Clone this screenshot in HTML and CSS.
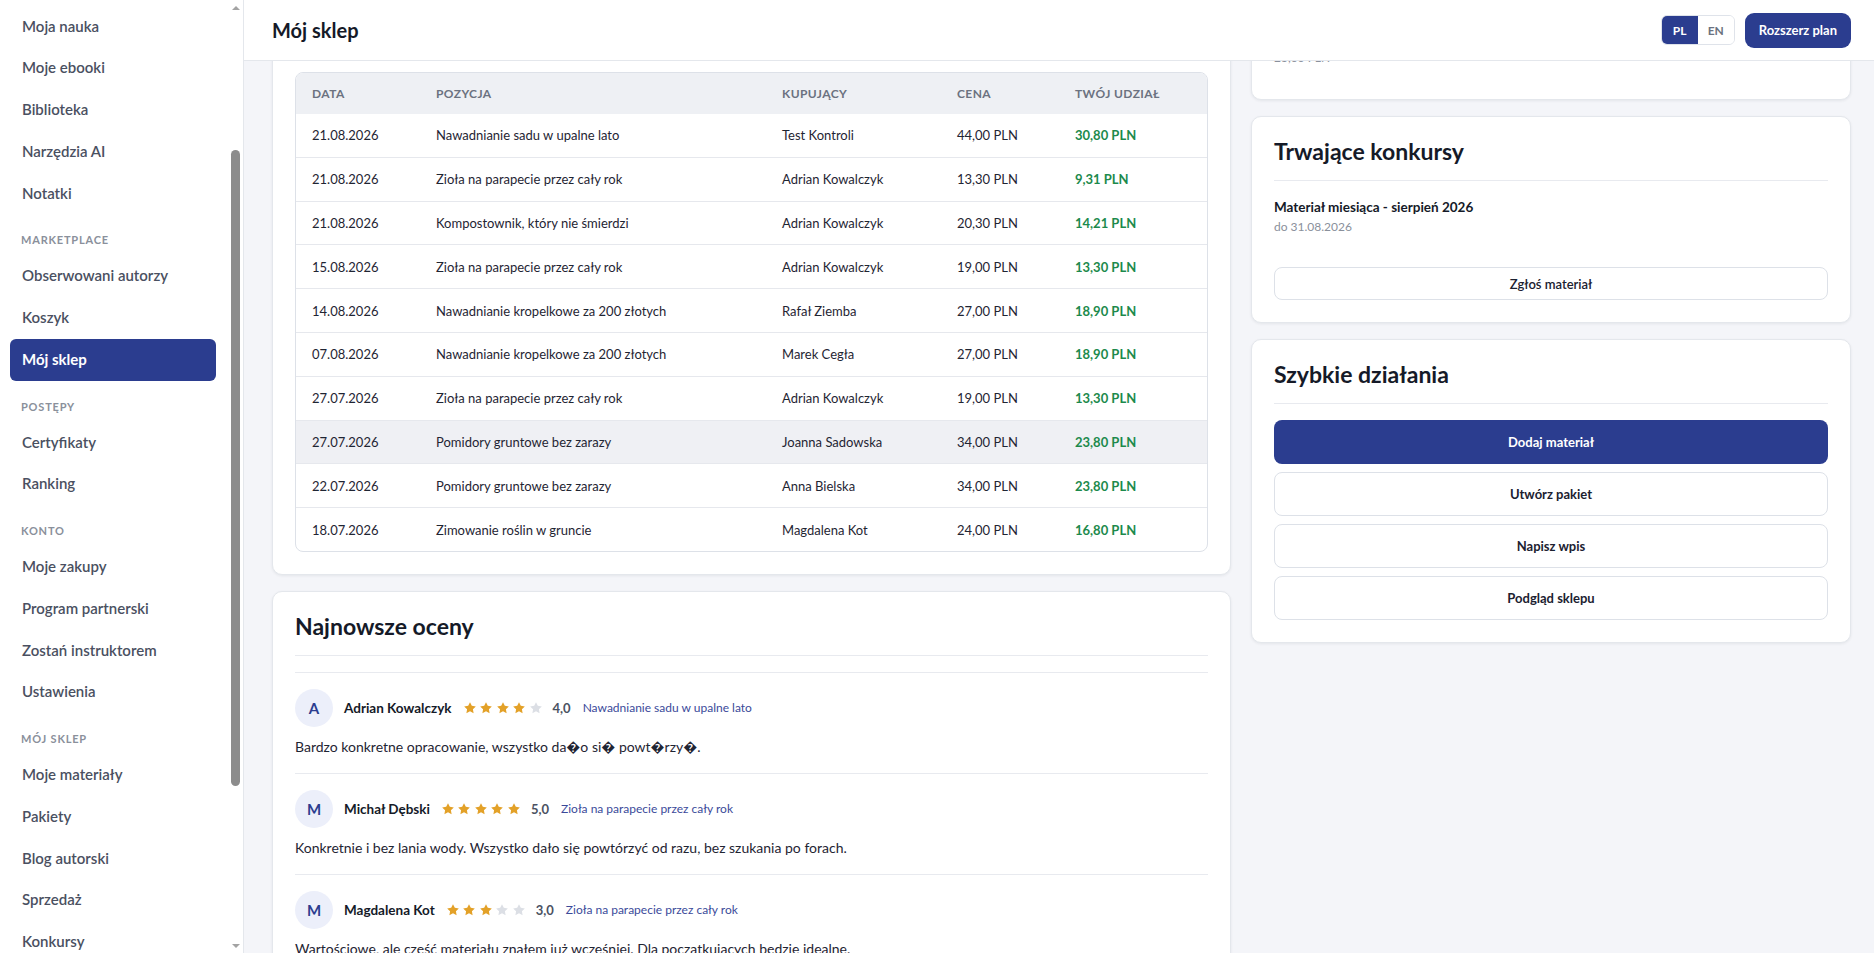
FILE: index.html
```html
<!DOCTYPE html>
<html lang="pl">
<head>
    <meta charset="UTF-8">
    <meta name="viewport" content="width=device-width, initial-scale=1.0">
    <title>Mój sklep</title>
    <link rel="stylesheet" href="styles.css">
</head>
<body>

    <aside class="sidebar">
        <div class="sidebar-scroll" id="sidebarScroll">
            <div class="brand">Ogrodowa Akademia</div>
            <nav class="nav">
                <div class="nav-label">Nauka</div>
                <a class="nav-item" href="#">Pulpit</a>
                <a class="nav-item" href="#">Moje kursy</a>
                <a class="nav-item" href="#" id="firstVisible">Moja nauka</a>
                <a class="nav-item" href="#">Moje ebooki</a>
                <a class="nav-item" href="#">Biblioteka</a>
                <a class="nav-item" href="#">Narzędzia AI</a>
                <a class="nav-item" href="#">Notatki</a>

                <div class="nav-label">Marketplace</div>
                <a class="nav-item" href="#">Obserwowani autorzy</a>
                <a class="nav-item" href="#">Koszyk</a>
                <a class="nav-item active" href="#">Mój sklep</a>

                <div class="nav-label">Postępy</div>
                <a class="nav-item" href="#">Certyfikaty</a>
                <a class="nav-item" href="#">Ranking</a>

                <div class="nav-label">Konto</div>
                <a class="nav-item" href="#">Moje zakupy</a>
                <a class="nav-item" href="#">Program partnerski</a>
                <a class="nav-item" href="#">Zostań instruktorem</a>
                <a class="nav-item" href="#">Ustawienia</a>

                <div class="nav-label">Mój sklep</div>
                <a class="nav-item" href="#">Moje materiały</a>
                <a class="nav-item" href="#">Pakiety</a>
                <a class="nav-item" href="#">Blog autorski</a>
                <a class="nav-item" href="#">Sprzedaż</a>
                <a class="nav-item" href="#">Konkursy</a>
                <a class="nav-item" href="#">Statystyki</a>
                <a class="nav-item" href="#">Wypłaty</a>
                <a class="nav-item" href="#">Opinie</a>
                <a class="nav-item" href="#">Kupony</a>
                <a class="nav-item" href="#">Pomoc</a>
            </nav>
        </div>
        <div class="scrollbar">
            <span class="scroll-arrow up"></span>
            <div class="scroll-track" id="scrollTrack">
                <div class="scroll-thumb" id="scrollThumb"></div>
            </div>
            <span class="scroll-arrow down"></span>
        </div>
    </aside>

    <main class="main" id="main">
        <header class="topbar">
            <h1 class="page-title">Mój sklep</h1>
            <div class="topbar-actions">
                <div class="lang-switch">
                    <button class="lang-btn active">PL</button>
                    <button class="lang-btn">EN</button>
                </div>
                <button class="btn-upgrade">Rozszerz plan</button>
            </div>
        </header>

        <div class="content">
            <div class="layout">
                <!-- Lewa kolumna -->
                <div class="column">
                    <section class="card">
                        <h2 class="card-title">Ostatnia sprzedaż</h2>
                        <div class="table-meta">Ostatnie 10 transakcji</div>
                        <div class="table-wrap" id="salesTable">
                            <table class="sales-table">
                                <thead>
                                    <tr>
                                        <th class="col-date">Data</th>
                                        <th class="col-item">Pozycja</th>
                                        <th class="col-buyer">Kupujący</th>
                                        <th class="col-price">Cena</th>
                                        <th>Twój udział</th>
                                    </tr>
                                </thead>
                                <tbody>
                                    <tr><td>21.08.2026</td><td>Nawadnianie sadu w upalne lato</td><td>Test Kontroli</td><td>44,00 PLN</td><td class="share">30,80 PLN</td></tr>
                                    <tr><td>21.08.2026</td><td>Zioła na parapecie przez cały rok</td><td>Adrian Kowalczyk</td><td>13,30 PLN</td><td class="share">9,31 PLN</td></tr>
                                    <tr><td>21.08.2026</td><td>Kompostownik, który nie śmierdzi</td><td>Adrian Kowalczyk</td><td>20,30 PLN</td><td class="share">14,21 PLN</td></tr>
                                    <tr><td>15.08.2026</td><td>Zioła na parapecie przez cały rok</td><td>Adrian Kowalczyk</td><td>19,00 PLN</td><td class="share">13,30 PLN</td></tr>
                                    <tr><td>14.08.2026</td><td>Nawadnianie kropelkowe za 200 złotych</td><td>Rafał Ziemba</td><td>27,00 PLN</td><td class="share">18,90 PLN</td></tr>
                                    <tr><td>07.08.2026</td><td>Nawadnianie kropelkowe za 200 złotych</td><td>Marek Cegła</td><td>27,00 PLN</td><td class="share">18,90 PLN</td></tr>
                                    <tr><td>27.07.2026</td><td>Zioła na parapecie przez cały rok</td><td>Adrian Kowalczyk</td><td>19,00 PLN</td><td class="share">13,30 PLN</td></tr>
                                    <tr class="is-hover"><td>27.07.2026</td><td>Pomidory gruntowe bez zarazy</td><td>Joanna Sadowska</td><td>34,00 PLN</td><td class="share">23,80 PLN</td></tr>
                                    <tr><td>22.07.2026</td><td>Pomidory gruntowe bez zarazy</td><td>Anna Bielska</td><td>34,00 PLN</td><td class="share">23,80 PLN</td></tr>
                                    <tr><td>18.07.2026</td><td>Zimowanie roślin w gruncie</td><td>Magdalena Kot</td><td>24,00 PLN</td><td class="share">16,80 PLN</td></tr>
                                </tbody>
                            </table>
                        </div>
                    </section>

                    <section class="card">
                        <h2 class="card-title">Najnowsze oceny</h2>
                        <div class="reviews">
                            <div class="review">
                                <div class="review-head">
                                    <span class="avatar">A</span>
                                    <span class="review-name">Adrian Kowalczyk</span>
                                    <span class="stars">
                                        <svg class="star on" viewBox="0 0 24 24"><path d="M12 2l3.09 6.26L22 9.27l-5 4.87 1.18 6.88L12 17.77l-6.18 3.25L7 14.14 2 9.27l6.91-1.01z"/></svg>
                                        <svg class="star on" viewBox="0 0 24 24"><path d="M12 2l3.09 6.26L22 9.27l-5 4.87 1.18 6.88L12 17.77l-6.18 3.25L7 14.14 2 9.27l6.91-1.01z"/></svg>
                                        <svg class="star on" viewBox="0 0 24 24"><path d="M12 2l3.09 6.26L22 9.27l-5 4.87 1.18 6.88L12 17.77l-6.18 3.25L7 14.14 2 9.27l6.91-1.01z"/></svg>
                                        <svg class="star on" viewBox="0 0 24 24"><path d="M12 2l3.09 6.26L22 9.27l-5 4.87 1.18 6.88L12 17.77l-6.18 3.25L7 14.14 2 9.27l6.91-1.01z"/></svg>
                                        <svg class="star" viewBox="0 0 24 24"><path d="M12 2l3.09 6.26L22 9.27l-5 4.87 1.18 6.88L12 17.77l-6.18 3.25L7 14.14 2 9.27l6.91-1.01z"/></svg>
                                    </span>
                                    <span class="review-score">4,0</span>
                                    <a class="review-item" href="#">Nawadnianie sadu w upalne lato</a>
                                </div>
                                <p class="review-text">Bardzo konkretne opracowanie, wszystko da�o si� powt�rzy�.</p>
                            </div>

                            <div class="review">
                                <div class="review-head">
                                    <span class="avatar">M</span>
                                    <span class="review-name">Michał Dębski</span>
                                    <span class="stars">
                                        <svg class="star on" viewBox="0 0 24 24"><path d="M12 2l3.09 6.26L22 9.27l-5 4.87 1.18 6.88L12 17.77l-6.18 3.25L7 14.14 2 9.27l6.91-1.01z"/></svg>
                                        <svg class="star on" viewBox="0 0 24 24"><path d="M12 2l3.09 6.26L22 9.27l-5 4.87 1.18 6.88L12 17.77l-6.18 3.25L7 14.14 2 9.27l6.91-1.01z"/></svg>
                                        <svg class="star on" viewBox="0 0 24 24"><path d="M12 2l3.09 6.26L22 9.27l-5 4.87 1.18 6.88L12 17.77l-6.18 3.25L7 14.14 2 9.27l6.91-1.01z"/></svg>
                                        <svg class="star on" viewBox="0 0 24 24"><path d="M12 2l3.09 6.26L22 9.27l-5 4.87 1.18 6.88L12 17.77l-6.18 3.25L7 14.14 2 9.27l6.91-1.01z"/></svg>
                                        <svg class="star on" viewBox="0 0 24 24"><path d="M12 2l3.09 6.26L22 9.27l-5 4.87 1.18 6.88L12 17.77l-6.18 3.25L7 14.14 2 9.27l6.91-1.01z"/></svg>
                                    </span>
                                    <span class="review-score">5,0</span>
                                    <a class="review-item" href="#">Zioła na parapecie przez cały rok</a>
                                </div>
                                <p class="review-text">Konkretnie i bez lania wody. Wszystko dało się powtórzyć od razu, bez szukania po forach.</p>
                            </div>

                            <div class="review">
                                <div class="review-head">
                                    <span class="avatar">M</span>
                                    <span class="review-name">Magdalena Kot</span>
                                    <span class="stars">
                                        <svg class="star on" viewBox="0 0 24 24"><path d="M12 2l3.09 6.26L22 9.27l-5 4.87 1.18 6.88L12 17.77l-6.18 3.25L7 14.14 2 9.27l6.91-1.01z"/></svg>
                                        <svg class="star on" viewBox="0 0 24 24"><path d="M12 2l3.09 6.26L22 9.27l-5 4.87 1.18 6.88L12 17.77l-6.18 3.25L7 14.14 2 9.27l6.91-1.01z"/></svg>
                                        <svg class="star on" viewBox="0 0 24 24"><path d="M12 2l3.09 6.26L22 9.27l-5 4.87 1.18 6.88L12 17.77l-6.18 3.25L7 14.14 2 9.27l6.91-1.01z"/></svg>
                                        <svg class="star" viewBox="0 0 24 24"><path d="M12 2l3.09 6.26L22 9.27l-5 4.87 1.18 6.88L12 17.77l-6.18 3.25L7 14.14 2 9.27l6.91-1.01z"/></svg>
                                        <svg class="star" viewBox="0 0 24 24"><path d="M12 2l3.09 6.26L22 9.27l-5 4.87 1.18 6.88L12 17.77l-6.18 3.25L7 14.14 2 9.27l6.91-1.01z"/></svg>
                                    </span>
                                    <span class="review-score">3,0</span>
                                    <a class="review-item" href="#">Zioła na parapecie przez cały rok</a>
                                </div>
                                <p class="review-text">Wartościowe, ale część materiału znałem już wcześniej. Dla początkujących będzie idealne.</p>
                            </div>

                            <div class="review">
                                <div class="review-head">
                                    <span class="avatar">J</span>
                                    <span class="review-name">Joanna Sadowska</span>
                                    <span class="stars">
                                        <svg class="star on" viewBox="0 0 24 24"><path d="M12 2l3.09 6.26L22 9.27l-5 4.87 1.18 6.88L12 17.77l-6.18 3.25L7 14.14 2 9.27l6.91-1.01z"/></svg>
                                        <svg class="star on" viewBox="0 0 24 24"><path d="M12 2l3.09 6.26L22 9.27l-5 4.87 1.18 6.88L12 17.77l-6.18 3.25L7 14.14 2 9.27l6.91-1.01z"/></svg>
                                        <svg class="star on" viewBox="0 0 24 24"><path d="M12 2l3.09 6.26L22 9.27l-5 4.87 1.18 6.88L12 17.77l-6.18 3.25L7 14.14 2 9.27l6.91-1.01z"/></svg>
                                        <svg class="star on" viewBox="0 0 24 24"><path d="M12 2l3.09 6.26L22 9.27l-5 4.87 1.18 6.88L12 17.77l-6.18 3.25L7 14.14 2 9.27l6.91-1.01z"/></svg>
                                        <svg class="star on" viewBox="0 0 24 24"><path d="M12 2l3.09 6.26L22 9.27l-5 4.87 1.18 6.88L12 17.77l-6.18 3.25L7 14.14 2 9.27l6.91-1.01z"/></svg>
                                    </span>
                                    <span class="review-score">5,0</span>
                                    <a class="review-item" href="#">Pomidory gruntowe bez zarazy</a>
                                </div>
                                <p class="review-text">Świetne porady, pomidory pierwszy raz przetrwały cały sezon.</p>
                            </div>
                        </div>
                    </section>
                </div>

                <!-- Prawa kolumna -->
                <div class="column">
                    <section class="card">
                        <div class="stat-label">Saldo do wypłaty</div>
                        <div class="stat-value">161,02 PLN</div>
                        <div class="stat-sub">23,00 PLN</div>
                    </section>

                    <section class="card">
                        <h2 class="card-title">Trwające konkursy</h2>
                        <div class="contest">
                            <div class="contest-name">Materiał miesiąca - sierpień 2026</div>
                            <div class="contest-date">do 31.08.2026</div>
                        </div>
                        <button class="btn btn-outline btn-small">Zgłoś materiał</button>
                    </section>

                    <section class="card">
                        <h2 class="card-title">Szybkie działania</h2>
                        <div class="actions">
                            <button class="btn btn-primary">Dodaj materiał</button>
                            <button class="btn btn-outline">Utwórz pakiet</button>
                            <button class="btn btn-outline">Napisz wpis</button>
                            <button class="btn btn-outline">Podgląd sklepu</button>
                        </div>
                    </section>
                </div>
            </div>
        </div>
    </main>

    <script>
        document.addEventListener('DOMContentLoaded', function() {
            const main = document.getElementById('main');
            const table = document.getElementById('salesTable');
            main.scrollTop = table.getBoundingClientRect().top - 72;

            const nav = document.getElementById('sidebarScroll');
            const first = document.getElementById('firstVisible');
            nav.scrollTop = first.getBoundingClientRect().top - 6;

            // the sidebar scrollbar is drawn by hand
            const track = document.getElementById('scrollTrack');
            const thumb = document.getElementById('scrollThumb');
            const trackHeight = track.clientHeight;
            thumb.style.height = (trackHeight * nav.clientHeight / nav.scrollHeight) + 'px';
            thumb.style.marginTop = (trackHeight * nav.scrollTop / nav.scrollHeight) + 'px';
        });
    </script>

</body>
</html>
```

FILE: styles.css
```css
body, html {
    height: 100%;
    margin: 0;
    font-family: Lato, 'Noto Sans', sans-serif;
    background-color: #f4f5f9;
    color: #1b2130;
    overflow: hidden;
}

body {
    display: flex;
}

button {
    font-family: inherit;
    cursor: pointer;
}

/* Sidebar */

.sidebar {
    width: 244px;
    flex-shrink: 0;
    height: 100vh;
    box-sizing: border-box;
    display: flex;
    background-color: #fff;
    border-right: 1px solid #e4e7ec;
}

.sidebar-scroll {
    flex: 1;
    min-width: 0;
    overflow: hidden;
}

.scrollbar {
    width: 15px;
    display: flex;
    flex-direction: column;
    align-items: center;
    background-color: #fff;
}

.scroll-arrow {
    height: 15px;
    width: 15px;
    display: flex;
    align-items: center;
    justify-content: center;
}

.scroll-arrow::before {
    content: '';
    border-left: 4px solid transparent;
    border-right: 4px solid transparent;
}

.scroll-arrow.up::before {
    border-bottom: 4px solid #a3a3a3;
}

.scroll-arrow.down::before {
    border-top: 4px solid #a3a3a3;
}

.scroll-track {
    flex: 1;
    width: 9px;
}

.scroll-thumb {
    width: 9px;
    background-color: #8c8c8c;
    border-radius: 5px;
}

.brand {
    height: 68px;
    display: flex;
    align-items: center;
    padding: 0 22px;
    font-size: 17px;
    font-weight: 700;
    color: #2b3d8f;
}

.nav {
    display: flex;
    flex-direction: column;
    padding: 16px 12px 8px 10px;
}

.nav-label {
    padding: 18px 11px 7px;
    line-height: 16px;
    font-size: 11px;
    font-weight: 700;
    letter-spacing: 0.8px;
    text-transform: uppercase;
    color: #8a909b;
}

.nav-item {
    display: block;
    padding: 10px 12px;
    line-height: 21.75px;
    font-size: 15px;
    font-weight: 600;
    color: #4a5061;
    text-decoration: none;
    border-radius: 6px;
}

.nav-item.active {
    background-color: #2b3d8f;
    color: #fff;
    font-weight: 700;
}

/* Main */

.main {
    flex: 1;
    min-width: 0;
    height: 100vh;
    overflow-y: auto;
    scrollbar-width: none;
}

.topbar {
    position: sticky;
    top: 0;
    z-index: 10;
    height: 60px;
    display: flex;
    align-items: center;
    justify-content: space-between;
    padding: 0 23px 0 28px;
    background-color: #fff;
    border-bottom: 1px solid #e4e7ec;
}

.page-title {
    margin: 0;
    font-size: 20px;
    font-weight: 700;
    color: #151a28;
}

.topbar-actions {
    display: flex;
    align-items: center;
    gap: 10px;
}

.lang-switch {
    display: flex;
    height: 30px;
    border: 1px solid #dfe3ea;
    border-radius: 6px;
    overflow: hidden;
    box-sizing: border-box;
}

.lang-btn {
    width: 36px;
    border: none;
    background: #fff;
    font-size: 12px;
    font-weight: 700;
    color: #6b7280;
    padding: 0;
}

.lang-btn.active {
    background-color: #2b3d8f;
    color: #fff;
}

.btn-upgrade {
    height: 35px;
    padding: 0 14px;
    border: none;
    border-radius: 9px;
    background-color: #2b3d8f;
    color: #fff;
    font-size: 13px;
    font-weight: 700;
}

.content {
    padding: 0 23px 28px 28px;
}

.layout {
    display: grid;
    grid-template-columns: minmax(0, 1fr) 600px;
    gap: 20px;
    align-items: start;
}

.column {
    display: flex;
    flex-direction: column;
    gap: 16px;
}

.card {
    background-color: #fff;
    border: 1px solid #e4e7ec;
    border-radius: 10px;
    padding: 22px;
    box-shadow: 0 1px 3px rgba(16, 24, 40, 0.07);
}

.card-title {
    margin: 0 0 16px;
    padding-bottom: 17px;
    border-bottom: 1px solid #e8eaef;
    font-size: 23px;
    line-height: 24px;
    font-weight: 700;
    color: #151a28;
}

/* Sales table */

.table-meta {
    margin-bottom: 16px;
    font-size: 12px;
    line-height: 20px;
    text-align: right;
    color: #8a909b;
}

.table-wrap {
    border: 1px solid #dde1e8;
    border-radius: 8px;
    overflow: hidden;
}

.sales-table {
    width: 100%;
    border-collapse: separate;
    border-spacing: 0;
    table-layout: fixed;
    font-size: 13px;
}

.sales-table th {
    height: 41px;
    padding: 0 16px;
    text-align: left;
    background-color: #eef0f4;
    font-size: 12px;
    font-weight: 700;
    letter-spacing: 0.4px;
    text-transform: uppercase;
    color: #6b7280;
}

.sales-table .col-date { width: 92px; }
.sales-table .col-item { width: 314px; }
.sales-table .col-buyer { width: 143px; }
.sales-table .col-price { width: 86px; }

.sales-table td {
    height: 42.8px;
    padding: 0 16px;
    border-top: 1px solid #e6e8ed;
    color: #1f2533;
    white-space: nowrap;
}

.sales-table tbody tr:first-child td {
    border-top: none;
}

.sales-table tr.is-hover td {
    background-color: #eff0f4;
}

.sales-table td.share {
    font-weight: 700;
    color: #1c8a4c;
}

/* Reviews */

.reviews {
    border-top: 1px solid #e8eaef;
}

.review {
    padding: 16px 0;
    border-bottom: 1px solid #e8eaef;
}

.review-head {
    display: flex;
    align-items: center;
}

.avatar {
    width: 38px;
    height: 38px;
    border-radius: 50%;
    background-color: #eceffa;
    color: #2b3d8f;
    font-size: 15px;
    font-weight: 700;
    display: flex;
    align-items: center;
    justify-content: center;
    margin-right: 11px;
}

.review-name {
    font-size: 13.5px;
    font-weight: 700;
    color: #151a28;
    margin-right: 11px;
}

.stars {
    display: flex;
    gap: 2.5px;
    margin-right: 10px;
}

.star {
    width: 14px;
    height: 14px;
    fill: #dcdfe5;
}

.star.on {
    fill: #e3a128;
}

.review-score {
    font-size: 13px;
    font-weight: 700;
    color: #4b5262;
    margin-right: 12px;
}

.review-item {
    font-size: 12px;
    color: #3b4a9a;
    text-decoration: none;
}

.review-text {
    margin: 10px 0 0;
    font-size: 14px;
    line-height: 20px;
    color: #1f2533;
}

/* Right column */

.stat-label {
    font-size: 13px;
    line-height: 18px;
    color: #6b7280;
}

.stat-value {
    font-size: 26px;
    line-height: 36px;
    font-weight: 700;
}

.stat-sub {
    margin: 18px 0 11px;
    font-size: 12px;
    line-height: 16px;
    color: #8a909b;
}

.contest {
    margin: 2px 0 32px;
}

.contest-name {
    font-size: 13.5px;
    line-height: 20px;
    font-weight: 700;
    color: #151a28;
}

.contest-date {
    margin-top: 2px;
    font-size: 12px;
    line-height: 16px;
    color: #8a909b;
}

.btn {
    display: block;
    width: 100%;
    height: 43.5px;
    border-radius: 8px;
    font-size: 13px;
    font-weight: 700;
}

.btn-small {
    height: 33px;
    font-weight: 600;
}

.btn-primary {
    border: none;
    background-color: #2b3d8f;
    color: #fff;
}

.btn-outline {
    border: 1px solid #dde1e8;
    background-color: #fff;
    color: #1b2130;
}

.actions {
    display: flex;
    flex-direction: column;
    gap: 8.5px;
}
```
